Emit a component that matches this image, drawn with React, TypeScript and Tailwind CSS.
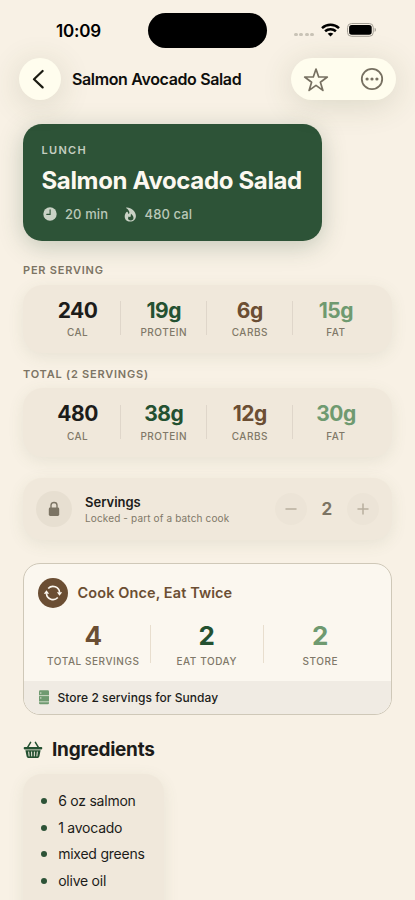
import React from "react";

type Stat = { value: string; label: string; color: string };

const colors = {
  ink: "text-[#1c1c1a]",
  green: "text-[#245131]",
  brown: "text-[#6b4e33]",
  sage: "text-[#6f9a70]",
};

function stats(cal: string, protein: string, carbs: string, fat: string): Stat[] {
  return [
    { value: cal, label: "CAL", color: colors.ink },
    { value: protein, label: "PROTEIN", color: colors.green },
    { value: carbs, label: "CARBS", color: colors.brown },
    { value: fat, label: "FAT", color: colors.sage },
  ];
}

function StatusBar() {
  return (
    <div className="flex h-[58px] pt-[13px]">
      <div className="w-[148px] pl-[56px] pt-[6px] text-[17px] leading-[24px] font-semibold tracking-[-0.2px] text-black">10:09</div>
      <div className="h-[35px] w-[119px] rounded-full bg-black" />
      <div className="flex h-[35px] items-center pl-[27px]">
        <div className="mt-[8px] flex gap-[1.8px]">
          {[0, 1, 2, 3].map((i) => (
            <span key={i} className="h-[3.7px] w-[3.7px] rounded-full bg-[#c9c3b6]" />
          ))}
        </div>
        <svg className="-mt-[1px] ml-[7px]" width="19" height="14" viewBox="0 0 19 14" fill="none" stroke="black" strokeWidth="2.5">
          <path d="M1 5.1C5.8 .7 13.2 .7 18 5.1" />
          <path d="M4.1 8.3C7.2 5.5 11.8 5.5 14.9 8.3" />
          <path d="M9.5 13.4 6.7 10.7C8.2 9.3 10.8 9.3 12.3 10.7Z" fill="black" stroke="none" />
        </svg>
        <svg className="-mt-[1px] ml-[6.5px]" width="30" height="14" viewBox="0 0 30 14">
          <rect x=".5" y=".5" width="25.8" height="12.8" rx="4" fill="none" stroke="#a5a096" />
          <rect x="2.1" y="2.1" width="22.6" height="9.6" rx="2.6" fill="black" />
          <path d="M27.6 4.8c1.9.7 1.9 3.5 0 4.2z" fill="#a5a096" />
        </svg>
      </div>
    </div>
  );
}

function NavBar() {
  return (
    <div className="flex h-[42px] items-center pl-[18.7px] pr-[18.8px]">
      <div className="flex h-[42px] w-[42px] items-center justify-center rounded-full bg-[#fffdee] shadow-[0_5px_32px_rgba(70,80,40,0.16)]">
        <svg className="-ml-[3px]" width="12" height="20" viewBox="0 0 12 20" fill="none" stroke="#1b1b12" strokeWidth="2.2" strokeLinecap="round" strokeLinejoin="round">
          <path d="M10.6 2 2 10.2l8.6 8.2" />
        </svg>
      </div>
      <div className="ml-[11.3px] text-[16px] leading-[22px] font-semibold tracking-[-0.36px] whitespace-nowrap text-[#0e0e0c]">Salmon Avocado Salad</div>
      <div className="ml-auto flex h-[42px] w-[105px] items-center justify-between rounded-full bg-[#fffdee] pl-[12px] pr-[12px] shadow-[0_5px_32px_rgba(70,80,40,0.16)]">
        <svg width="26" height="25" viewBox="0 0 26 25" fill="none" stroke="#777061" strokeWidth="1.7" strokeLinejoin="round">
          <path d="M13 2.1 15.7 10h8.6l-6.9 5.2 2.5 8.2-6.9-5-6.9 5 2.5-8.2L1.7 10h8.6z" />
        </svg>
        <svg width="24" height="24" viewBox="0 0 24 24" fill="none" stroke="#777061" strokeWidth="1.8">
          <circle cx="12" cy="12" r="10.2" />
          <g fill="#777061" stroke="none">
            <circle cx="7.1" cy="12" r="1.6" />
            <circle cx="12" cy="12" r="1.6" />
            <circle cx="16.9" cy="12" r="1.6" />
          </g>
        </svg>
      </div>
    </div>
  );
}

function Hero() {
  return (
    <div className="h-[117px] w-[299px] rounded-[19px] bg-[#2d5337] pl-[18.5px] pt-[18px] shadow-[0_5px_24px_rgba(45,83,55,0.26)]">
      <div className="text-[11px] leading-[16px] font-semibold tracking-[1.3px] text-[#c5cfc0]">LUNCH</div>
      <div className="mt-[7px] text-[24px] leading-[32px] font-bold tracking-[-0.35px] whitespace-nowrap text-[#fcf8f0]">Salmon Avocado Salad</div>
      <div className="mt-[8px] flex h-[18px] items-center text-[13px] leading-[18px] font-medium tracking-[0.1px] text-[#bac8b8]">
        <svg className="ml-[1px]" width="14" height="14" viewBox="0 0 14 14">
          <circle cx="7" cy="7" r="6.7" fill="#c9d2c5" />
          <path d="M7.1 2.8v4.6H3.8" fill="none" stroke="#2d5337" strokeWidth="1.1" strokeLinecap="round" />
        </svg>
        <span className="ml-[8.5px] w-[50px]">20 min</span>
        <svg className="ml-[8.5px]" width="13" height="15" viewBox="0 0 13 15">
          <path d="M2.5.5C6.8.2 11.9 4.3 11.9 9c0 3.5-2.4 5.6-5.8 5.6C2.9 14.6.7 12.6.7 9.6c0-2.2 1-3.9 2.2-4.8.5-.4 1 0 1 .6 0 .8.3 1.4.9 1.4C6 6.8 5.7 3.4 2.4 1.3 2 1 2.1.6 2.5.5Z" fill="#c9d2c5" />
          <path d="M7 6.8c1.5 1.3 2.5 2.5 2.5 4.1 0 1.5-1 2.5-2.8 2.5-1.6 0-2.7-.8-2.7-2.1 0-.9.4-1.6 1-2.1.3.8.8 1.1 1.2.8.8-.5.4-1.6.8-3.2Z" fill="#2d5337" />
        </svg>
        <span className="ml-[8px]">480 cal</span>
      </div>
    </div>
  );
}

function Divider({ tall = false }: { tall?: boolean }) {
  return <span className={tall ? "h-[38px] w-px bg-[#e8dece]" : "h-[34px] w-px bg-[#dfd6ca]"} />;
}

function Nutrition({ title, items }: { title: string; items: Stat[] }) {
  return (
    <section>
      <h2 className="h-[14px] text-[11px] leading-[14px] font-semibold tracking-[0.78px] text-[#7c7464]">{title}</h2>
      <div className="mt-[7.5px] flex h-[68.5px] items-center rounded-[20px] bg-[#f0e8db] pl-[12px] pr-[13.5px] pb-[1px] shadow-[0_4px_16px_rgba(90,110,70,0.1)]">
        {items.map((s, i) => (
          <React.Fragment key={s.label}>
            {i > 0 && <Divider />}
            <div className="flex flex-1 flex-col items-center">
              <span className={`text-[21px] leading-[26px] font-bold tracking-[-0.5px] ${s.color}`}>{s.value}</span>
              <span className="mt-[1.5px] text-[10px] leading-[14px] font-medium tracking-[0.5px] text-[#807868]">{s.label}</span>
            </div>
          </React.Fragment>
        ))}
      </div>
    </section>
  );
}

function Servings() {
  return (
    <div className="flex h-[62px] items-center rounded-[19px] bg-[#f0e8db] pl-[13px] pr-[13.5px] shadow-[0_4px_16px_rgba(90,110,70,0.1)]">
      <div className="flex h-[36px] w-[36px] items-center justify-center rounded-full bg-[#e7dfd1]">
        <svg width="12" height="16" viewBox="0 0 12 16">
          <path d="M3 7V4.2C3 .5 9 .5 9 4.2V7" fill="none" stroke="#7c7464" strokeWidth="1.4" />
          <rect x=".8" y="6.6" width="10.4" height="8.4" rx="1.4" fill="#7c7464" />
        </svg>
      </div>
      <div className="ml-[13px]">
        <div className="text-[13px] leading-[17px] font-semibold text-[#1c1c1a]">Servings</div>
        <div className="text-[10px] leading-[14px] tracking-[0.14px] whitespace-nowrap text-[#807868]">Locked - part of a batch cook</div>
      </div>
      <div className="ml-auto flex items-center">
        <div className="flex h-[32px] w-[32px] items-center justify-center rounded-full bg-[#ece4d7]">
          <svg width="12" height="12" viewBox="0 0 12 12" stroke="#b8af9f" strokeWidth="1.5" strokeLinecap="round"><path d="M1 6h10" /></svg>
        </div>
        <span className="w-[39.5px] text-center text-[17px] leading-[24px] font-bold text-[#7c7464]">2</span>
        <div className="flex h-[32px] w-[32px] items-center justify-center rounded-full bg-[#ece4d7]">
          <svg width="12" height="12" viewBox="0 0 12 12" stroke="#b8af9f" strokeWidth="1.5" strokeLinecap="round"><path d="M1 6h10M6 1v10" /></svg>
        </div>
      </div>
    </div>
  );
}

const batch: Stat[] = [
  { value: "4", label: "TOTAL SERVINGS", color: colors.brown },
  { value: "2", label: "EAT TODAY", color: colors.green },
  { value: "2", label: "STORE", color: colors.sage },
];

function BatchCard() {
  return (
    <div className="h-[152px] overflow-hidden rounded-[17px] border border-[#cfc8b8] bg-[#fbf7ef]">
      <div className="flex h-[58px] items-center pl-[14px]">
        <div className="flex h-[30px] w-[30px] items-center justify-center rounded-full bg-[#6b4e33]">
          <svg width="20" height="18" viewBox="0 0 20 18" fill="none" stroke="#fcf8f0" strokeWidth="1.6">
            <path d="M5.2 4.5A6.6 6.6 0 0 1 16.6 8.6" />
            <path d="M14.8 13.5A6.6 6.6 0 0 1 3.4 9.4" />
            <path d="M13.9 8.3h5.3l-2.7 3.5zM6.1 9.7H.8l2.7-3.5z" fill="#fcf8f0" stroke="none" />
          </svg>
        </div>
        <span className="ml-[9.5px] text-[14.5px] leading-[20px] font-semibold tracking-[0.1px] text-[#6b4e33]">Cook Once, Eat Twice</span>
      </div>
      <div className="flex h-[59px] items-start pl-[13px] pr-[14.5px]">
        {batch.map((s, i) => (
          <React.Fragment key={s.label}>
            {i > 0 && <div className="flex pt-[3px]"><Divider tall /></div>}
            <div className="flex flex-1 flex-col items-center">
              <span className={`text-[26px] leading-[28px] font-bold ${s.color}`}>{s.value}</span>
              <span className="mt-[4px] text-[10px] leading-[14px] font-medium tracking-[0.55px] whitespace-nowrap text-[#807868]">{s.label}</span>
            </div>
          </React.Fragment>
        ))}
      </div>
      <div className="flex h-[33px] items-center bg-[#f0ebe3] pl-[15px]">
        <svg width="10" height="15" viewBox="0 0 10 15">
          <rect width="10" height="14" y=".2" rx="1.2" fill="#6f9a70" />
          <path d="M0 5.6h10M0 11.8h10" stroke="#e5e8db" strokeWidth=".8" />
          <path d="M1.8 2.3v1.5M1.8 7.2v1.5" stroke="#e5e8db" strokeWidth="1" />
        </svg>
        <span className="ml-[8.5px] text-[12px] leading-[16px] font-medium tracking-[0.05px] text-[#1c1c1a]">Store 2 servings for Sunday</span>
      </div>
    </div>
  );
}

const ingredients = ["6 oz salmon", "1 avocado", "mixed greens", "olive oil"];

function Ingredients() {
  return (
    <section>
      <div className="flex h-[26px] items-center">
        <svg width="20" height="18" viewBox="0 0 20 18">
          <path d="M1.6 6.1h16.8c1.2 0 1.2 2.3 0 2.3H1.6C.4 8.4.4 6.1 1.6 6.1ZM2.4 9.3h15.2l-1.2 6c-.3 1.2-1 1.8-2.2 1.8H5.8c-1.2 0-1.9-.6-2.2-1.8z" fill="#245131" />
          <path d="M4.6 6.4 7.6 1.3M15.4 6.4l-3-5.1" stroke="#245131" strokeWidth="1.5" strokeLinecap="round" />
          <path d="m5.7 11 .4 4M8.6 11l.1 4M11.4 11l-.1 4M14.3 11l-.4 4" stroke="#f2eee1" strokeWidth="1" strokeLinecap="round" />
        </svg>
        <h2 className="ml-[9px] text-[19px] leading-[26px] font-bold tracking-[-0.26px] text-[#1c1c1a]">Ingredients</h2>
      </div>
      <ul className="mt-[11px] h-[160px] w-[141px] rounded-[19px] bg-[#f0e8db] pl-[18px] pt-[14px] shadow-[0_4px_16px_rgba(90,110,70,0.1)]">
        {ingredients.map((name) => (
          <li key={name} className="flex h-[26.5px] items-center">
            <span className="h-[6px] w-[6px] rounded-full bg-[#2d5337]" />
            <span className="ml-[11.2px] text-[14px] leading-[20px] tracking-[-0.24px] whitespace-nowrap text-[#1c1c1a]">{name}</span>
          </li>
        ))}
      </ul>
    </section>
  );
}

export default function App() {
  return (
    <main className="h-[900px] w-[415px] overflow-hidden bg-[#f8f1e5] font-['Inter',sans-serif]">
      <StatusBar />
      <NavBar />
      <div className="pl-[23px] pr-[23px] pt-[24px]">
        <Hero />
        <div className="mt-[22px]"><Nutrition title="PER SERVING" items={stats("240", "19g", "6g", "15g")} /></div>
        <div className="mt-[13.5px]"><Nutrition title="TOTAL (2 SERVINGS)" items={stats("480", "38g", "12g", "30g")} /></div>
        <div className="mt-[21.5px]"><Servings /></div>
        <div className="mt-[23px]"><BatchCard /></div>
        <div className="mt-[22px]"><Ingredients /></div>
      </div>
    </main>
  );
}
